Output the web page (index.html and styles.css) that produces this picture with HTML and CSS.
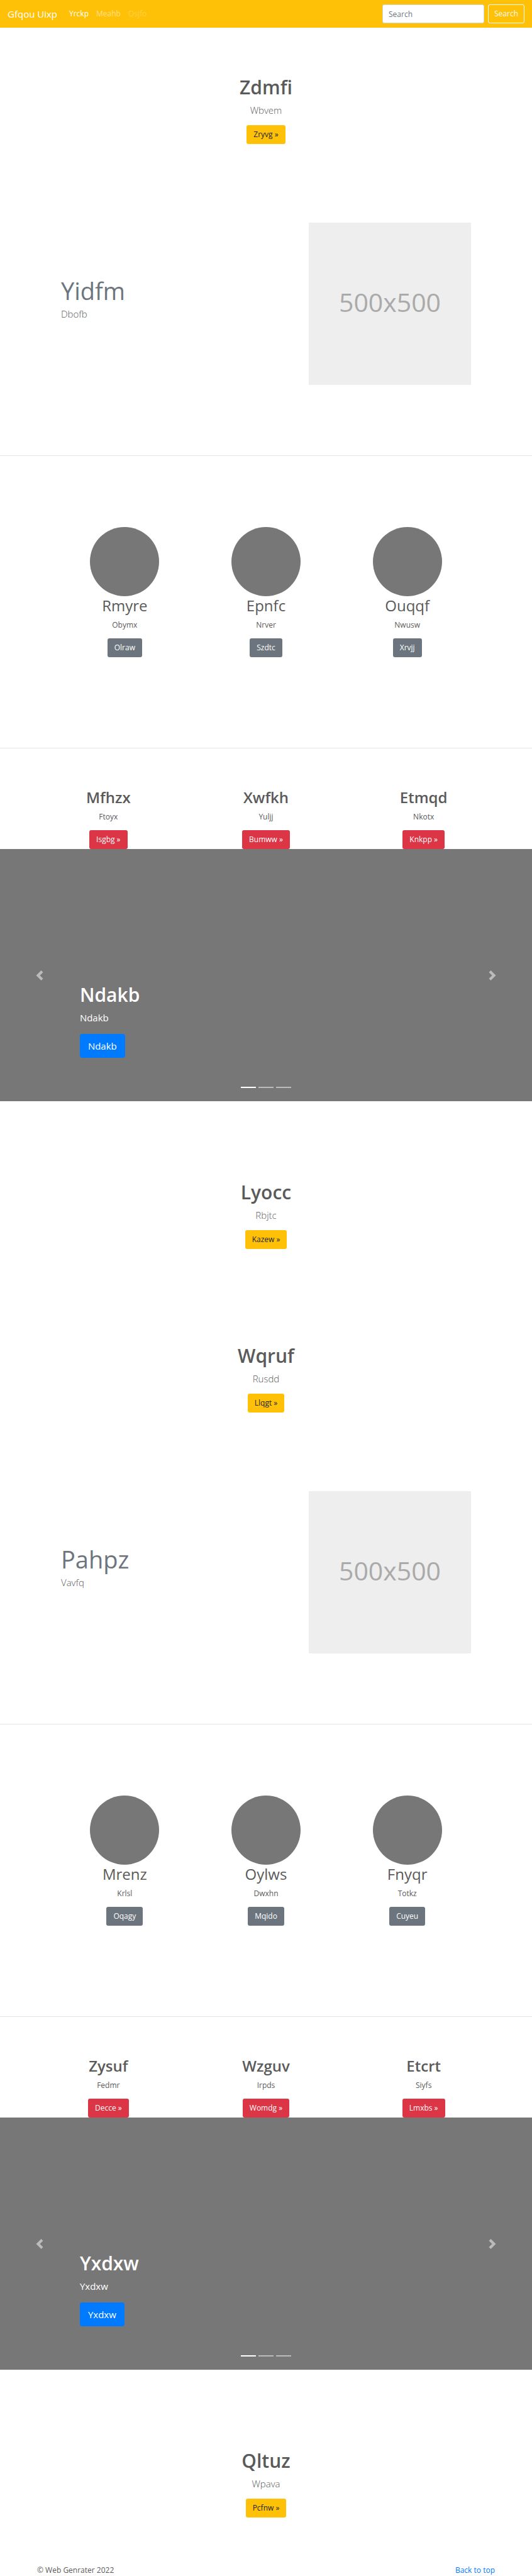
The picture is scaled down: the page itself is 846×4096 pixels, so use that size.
FILE: index.html
```html
<!DOCTYPE html>
<html lang="en">
<head>
<meta charset="utf-8">
<meta name="viewport" content="width=device-width, initial-scale=1">
<title>Gfqou Uixp</title>
<link rel="stylesheet" href="styles.css">
</head>
<body id="top">
<header class="navbar">
  <a class="brand" href="#top">Gfqou Uixp</a>
  <nav class="nav-links">
    <a class="nav-link active" href="#">Yrckp</a>
    <a class="nav-link" href="#">Meahb</a>
    <a class="nav-link disabled" href="#">Osjfo</a>
  </nav>
  <form class="search">
    <input class="search-input" type="text" placeholder="Search" aria-label="Search">
    <button class="btn btn-outline" type="button">Search</button>
  </form>
</header>
<main>
  <section class="hero">
    <h1 class="title">Zdmfi</h1>
    <p class="lead">Wbvem</p>
    <a class="btn btn-warning" href="#">Zryvg »</a>
  </section>

  <section class="feature">
    <div class="feature-text">
      <h2 class="feature-title">Yidfm</h2>
      <p class="lead">Dbofb</p>
    </div>
    <div class="placeholder">500x500</div>
  </section>
  <hr class="divider">

  <section class="circles">
    <div class="column">
      <div class="circle"></div>
      <h2 class="column-title">Rmyre</h2>
      <p class="column-text">Obymx</p>
      <a class="btn btn-secondary" href="#">Olraw</a>
    </div>
    <div class="column">
      <div class="circle"></div>
      <h2 class="column-title">Epnfc</h2>
      <p class="column-text">Nrver</p>
      <a class="btn btn-secondary" href="#">Szdtc</a>
    </div>
    <div class="column">
      <div class="circle"></div>
      <h2 class="column-title">Ouqqf</h2>
      <p class="column-text">Nwusw</p>
      <a class="btn btn-secondary" href="#">Xrvjj</a>
    </div>
  </section>
  <hr class="divider">

  <section class="cards">
    <div class="column">
      <h2 class="column-title strong">Mfhzx</h2>
      <p class="column-text">Ftoyx</p>
      <a class="btn btn-danger" href="#">Isgbg »</a>
    </div>
    <div class="column">
      <h2 class="column-title strong">Xwfkh</h2>
      <p class="column-text">Yuljj</p>
      <a class="btn btn-danger" href="#">Bumww »</a>
    </div>
    <div class="column">
      <h2 class="column-title strong">Etmqd</h2>
      <p class="column-text">Nkotx</p>
      <a class="btn btn-danger" href="#">Knkpp »</a>
    </div>
  </section>

  <section class="carousel">
    <button class="control" type="button" aria-label="Previous"><svg class="chevron" viewBox="0 0 8 8"><path d="M5.25 0l-4 4 4 4 1.5-1.5L4.25 4l2.5-2.5L5.25 0z"/></svg></button>
    <div class="caption">
      <h2 class="title">Ndakb</h2>
      <p class="caption-text">Ndakb</p>
      <a class="btn btn-primary" href="#">Ndakb</a>
    </div>
    <button class="control" type="button" aria-label="Next"><svg class="chevron" viewBox="0 0 8 8"><path d="M2.75 0l-1.5 1.5L3.75 4l-2.5 2.5L2.75 8l4-4-4-4z"/></svg></button>
    <div class="indicators"><span class="bar current"></span><span class="bar"></span><span class="bar"></span></div>
  </section>

  <section class="hero">
    <h2 class="title">Lyocc</h2>
    <p class="lead">Rbjtc</p>
    <a class="btn btn-warning" href="#">Kazew »</a>
  </section>
  <section class="hero">
    <h2 class="title">Wqruf</h2>
    <p class="lead">Rusdd</p>
    <a class="btn btn-warning" href="#">Llqgt »</a>
  </section>

  <section class="feature">
    <div class="feature-text">
      <h2 class="feature-title">Pahpz</h2>
      <p class="lead">Vavfq</p>
    </div>
    <div class="placeholder">500x500</div>
  </section>
  <hr class="divider">

  <section class="circles">
    <div class="column">
      <div class="circle"></div>
      <h2 class="column-title">Mrenz</h2>
      <p class="column-text">Krlsl</p>
      <a class="btn btn-secondary" href="#">Oqagy</a>
    </div>
    <div class="column">
      <div class="circle"></div>
      <h2 class="column-title">Oylws</h2>
      <p class="column-text">Dwxhn</p>
      <a class="btn btn-secondary" href="#">Mqido</a>
    </div>
    <div class="column">
      <div class="circle"></div>
      <h2 class="column-title">Fnyqr</h2>
      <p class="column-text">Totkz</p>
      <a class="btn btn-secondary" href="#">Cuyeu</a>
    </div>
  </section>
  <hr class="divider">

  <section class="cards">
    <div class="column">
      <h2 class="column-title strong">Zysuf</h2>
      <p class="column-text">Fedmr</p>
      <a class="btn btn-danger" href="#">Decce »</a>
    </div>
    <div class="column">
      <h2 class="column-title strong">Wzguv</h2>
      <p class="column-text">Irpds</p>
      <a class="btn btn-danger" href="#">Womdg »</a>
    </div>
    <div class="column">
      <h2 class="column-title strong">Etcrt</h2>
      <p class="column-text">Siyfs</p>
      <a class="btn btn-danger" href="#">Lmxbs »</a>
    </div>
  </section>

  <section class="carousel">
    <button class="control" type="button" aria-label="Previous"><svg class="chevron" viewBox="0 0 8 8"><path d="M5.25 0l-4 4 4 4 1.5-1.5L4.25 4l2.5-2.5L5.25 0z"/></svg></button>
    <div class="caption">
      <h2 class="title">Yxdxw</h2>
      <p class="caption-text">Yxdxw</p>
      <a class="btn btn-primary" href="#">Yxdxw</a>
    </div>
    <button class="control" type="button" aria-label="Next"><svg class="chevron" viewBox="0 0 8 8"><path d="M2.75 0l-1.5 1.5L3.75 4l-2.5 2.5L2.75 8l4-4-4-4z"/></svg></button>
    <div class="indicators"><span class="bar current"></span><span class="bar"></span><span class="bar"></span></div>
  </section>

  <section class="hero">
    <h2 class="title">Qltuz</h2>
    <p class="lead">Wpava</p>
    <a class="btn btn-warning" href="#">Pcfnw »</a>
  </section>
</main>
<footer class="footer">
  <span>© Web Genrater 2022</span>
  <a class="footer-link" href="#top">Back to top</a>
</footer>
</body>
</html>
```
FILE: styles.css
```css
* {
  box-sizing: border-box;
}

body {
  margin: 0;
  background: #fff;
  color: #5a5a5a;
  font-family: "Open Sans", "Noto Sans", sans-serif;
  font-size: 12px;
  line-height: 18px;
}

h1, h2, p {
  margin: 0;
}

a {
  text-decoration: none;
}

/* Navigation */
.navbar {
  display: flex;
  align-items: center;
  height: 44px;
  padding: 0 12px;
  background: #ffc107;
}

.brand {
  margin-right: 13px;
  color: #fff;
  font-size: 15px;
  line-height: 24px;
}

.nav-links {
  display: flex;
  flex: 1;
}

.nav-link {
  padding: 6px;
  color: rgba(255, 255, 255, 0.5);
}

.nav-link.active {
  color: #fff;
}

.nav-link.disabled {
  color: rgba(255, 255, 255, 0.25);
}

.search {
  display: flex;
  gap: 6px;
}

.search-input {
  width: 162px;
  height: 30px;
  padding: 0 9px;
  border: 1px solid #ced4da;
  border-radius: 3px;
  background: #fff;
  color: #495057;
  font: inherit;
}

.search-input::placeholder {
  color: #6c757d;
  opacity: 1;
}

/* Buttons */
.btn {
  display: inline-block;
  padding: 5px 10px;
  border: 1px solid transparent;
  border-radius: 3px;
  font-family: inherit;
  font-size: 12px;
  line-height: 18px;
}

.btn-outline {
  padding: 5px 9px;
  border-color: #f8f9fa;
  background: transparent;
  color: #f8f9fa;
}

.btn-warning {
  background: #ffc107;
  color: #212529;
}

.btn-secondary {
  background: #6c757d;
  color: #fff;
}

.btn-danger {
  background: #dc3545;
  color: #fff;
}

.btn-primary {
  padding: 6px 12px;
  border-radius: 4px;
  background: #007bff;
  color: #fff;
  font-size: 15px;
  line-height: 24px;
}

/* Heading blocks */
.hero {
  display: flex;
  flex-direction: column;
  align-items: center;
  padding: 77px 12px 75px;
}

.title {
  margin-bottom: 6px;
  font-size: 30px;
  font-weight: 600;
  line-height: 36px;
}

.lead {
  margin-bottom: 12px;
  font-size: 15px;
  font-weight: 300;
  line-height: 24px;
}

/* Text beside a picture */
.feature {
  display: flex;
  align-items: center;
  justify-content: space-between;
  max-width: 652px;
  margin: 50px auto 112px;
}

.feature-text {
  padding-bottom: 3px;
}

.feature-title {
  margin-bottom: 3px;
  color: #6c757d;
  font-size: 38px;
  font-weight: 400;
  line-height: 44px;
}

.placeholder {
  display: flex;
  align-items: center;
  justify-content: center;
  width: 258px;
  aspect-ratio: 1;
  padding-bottom: 7px;
  background: #eee;
  color: #aaa;
  font-size: 41px;
}

.divider {
  width: 100%;
  height: 1px;
  margin: 0;
  border: 0;
  background: #e5e5e5;
}

/* Three-column rows */
.circles,
.cards {
  display: grid;
  grid-template-columns: repeat(3, 1fr);
  margin: 0 auto;
}

.circles {
  max-width: 674px;
  padding: 113px 0 144px;
}

.cards {
  max-width: 752px;
  padding-top: 63px;
}

.column {
  display: flex;
  flex-direction: column;
  align-items: center;
}

.circle {
  width: 110px;
  height: 110px;
  border-radius: 50%;
  background: #777;
}

.column-title {
  margin-bottom: 7px;
  font-size: 24px;
  font-weight: 400;
  line-height: 30px;
}

.column-title.strong {
  font-weight: 600;
}

.column-text {
  margin-bottom: 12px;
}

/* Carousel */
.carousel {
  position: relative;
  display: grid;
  grid-template-columns: 15% 1fr 15%;
  height: 401px;
  margin-bottom: 50px;
  background: #777;
  color: #fff;
}

.control {
  display: flex;
  align-items: center;
  justify-content: center;
  padding: 0;
  border: 0;
  background: transparent;
  opacity: 0.5;
}

.chevron {
  width: 16px;
  height: 16px;
  fill: #fff;
}

.caption {
  align-self: end;
  padding-bottom: 69px;
}

.caption .btn {
  display: block;
  width: fit-content;
}

.caption-text {
  margin-bottom: 14px;
  font-size: 15px;
  line-height: 24px;
}

.indicators {
  position: absolute;
  right: 0;
  bottom: 21px;
  left: 0;
  display: flex;
  justify-content: center;
  gap: 4px;
}

.bar {
  width: 24px;
  height: 2px;
  background: #fff;
  opacity: 0.5;
}

.bar.current {
  opacity: 1;
}

/* Footer */
.footer {
  display: flex;
  justify-content: space-between;
  max-width: 752px;
  margin: 0 auto;
  padding: 0 12px;
}

.footer-link {
  color: #007bff;
}
```
